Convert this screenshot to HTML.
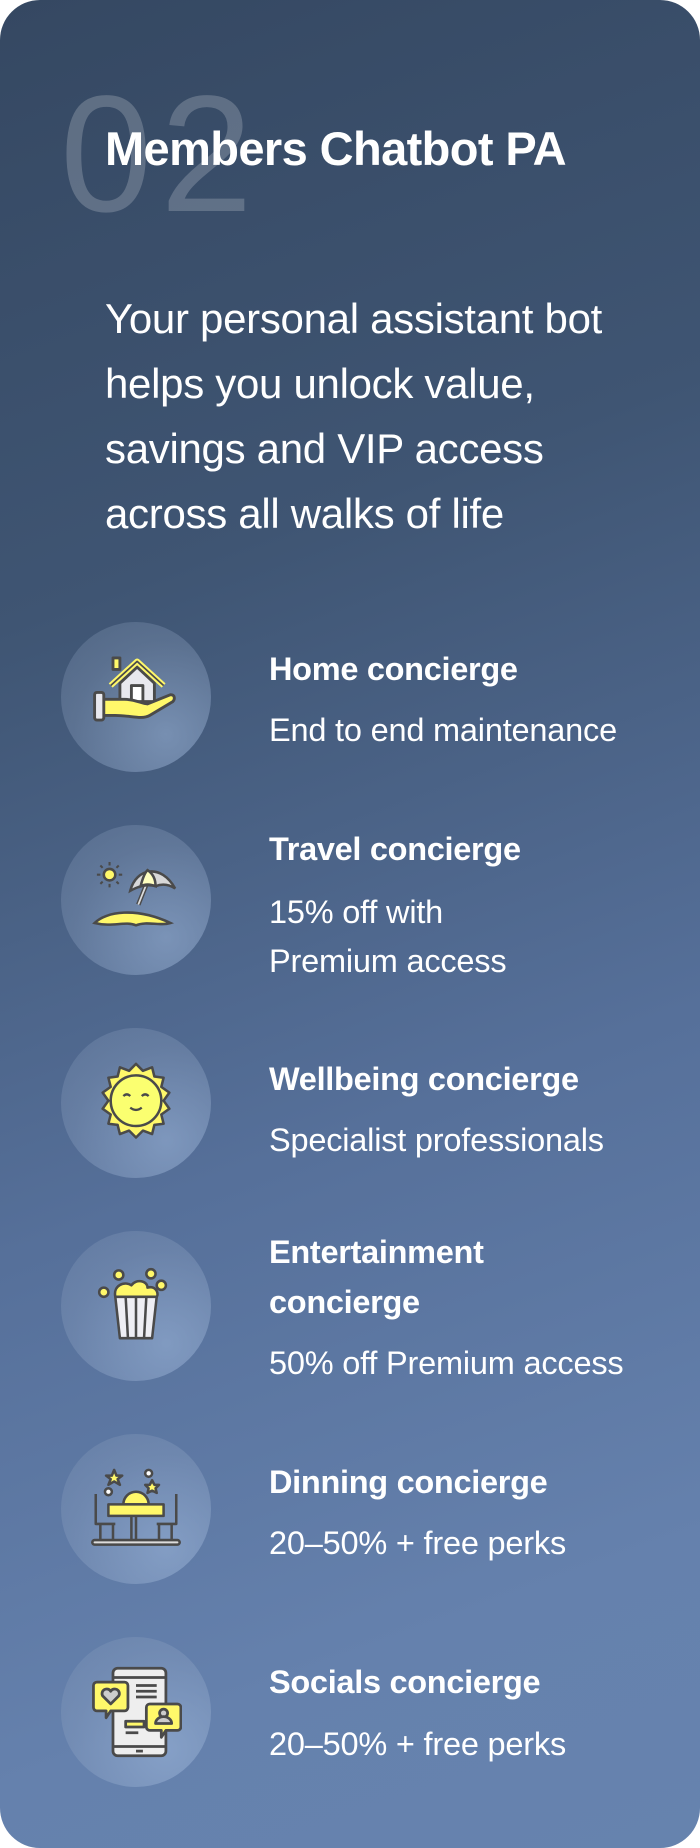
<!DOCTYPE html>
<html><head><meta charset="utf-8"><style>
html,body{margin:0;padding:0;background:#fff;}
body{width:700px;height:1848px;position:relative;overflow:hidden;font-family:"Liberation Sans",sans-serif;}
.card{position:absolute;left:0;top:0;width:700px;height:1848px;border-radius:40px;background:linear-gradient(160deg,#354862 0%,#3f5573 30%,#56709a 60%,#6581ad 85%,#6683ae 100%);overflow:hidden;}
.num{position:absolute;left:60px;top:72px;font-size:166px;font-weight:400;color:rgba(255,255,255,0.2);letter-spacing:8px;line-height:1;}
.title{position:absolute;left:105px;top:125px;font-size:47px;font-weight:700;color:#fff;letter-spacing:-0.6px;line-height:1;}
.para{position:absolute;left:105px;top:286px;font-size:42px;color:#fff;line-height:65px;letter-spacing:-0.3px;}
.circ{position:absolute;left:61px;width:150px;height:150px;border-radius:50%;background:radial-gradient(circle at 70% 75%,rgba(160,185,220,0.55),rgba(150,170,200,0.3) 60%,rgba(130,150,180,0.25));}
.circ svg{position:absolute;left:29px;top:29px;width:92px;height:92px;}
.h{position:absolute;left:269px;font-size:32.5px;font-weight:700;color:#fff;line-height:50px;letter-spacing:-0.3px;}
.s{position:absolute;left:269px;font-size:32.5px;color:#fff;line-height:49px;letter-spacing:-0.2px;}
</style></head><body>
<div class="card">
<div class="num">02</div>
<div class="title">Members Chatbot PA</div>
<div class="para">Your personal assistant bot<br>helps you unlock value,<br>savings and VIP access<br>across all walks of life</div>

<div class="circ" style="top:622px"><svg viewBox="0 0 80 80" fill="none" stroke="#4a4a4a" stroke-width="2.5" stroke-linejoin="round">
<rect x="20" y="6" width="6" height="10" fill="#fff86a"/>
<path d="M26 28 L41 14 L56 28 V44 H26Z" fill="#e8e8ee"/>
<rect x="36" y="30" width="10" height="14" fill="#fff"/>
<path d="M18 30 L41 9 L64 30" stroke="#fff86a" stroke-width="5"/>
<path d="M18 30 L41 9 L64 30" stroke="#4a4a4a" stroke-width="1.5"/>
<path d="M10 42 H30 C40 42 45 46 50 46 L70 38 C74 38 74 42 72 44 L52 56 C45 60 35 56 22 56 H10Z" fill="#fff86a"/>
<rect x="4" y="36" width="8" height="24" rx="2" fill="#e8e8ee"/>
</svg></div>
<div class="h" style="top:644px">Home concierge</div>
<div class="s" style="top:706px">End to end maintenance</div>

<div class="circ" style="top:825px"><svg viewBox="0 0 80 80" fill="none" stroke="#4a4a4a" stroke-width="2.2">
<circle cx="17" cy="18" r="5" fill="#fff86a"/>
<path d="M17 7v3M17 26v3M6 18h3M25 18h3M9 10l2 2M23 24l2 2M9 26l2-2M23 12l2-2" stroke-width="1.8"/>
<path d="M42 44 L50 24" stroke-width="4"/><path d="M42 44 L50 24" stroke="#ddd" stroke-width="1.5"/>
<path d="M35 32 C40 12 62 8 74 30 C68 26 62 26 57 28 C50 26 42 28 35 32Z" fill="#d8d8d8"/>
<path d="M50 14 C56 18 57 24 57 28 C52 26 48 26 44 28 C46 20 48 16 50 14Z" fill="#ffffc0"/>
<path d="M4 60 C14 50 40 46 70 60 C60 63 50 58 40 62 C30 58 20 64 4 60Z" fill="#fff86a"/>
</svg></div>
<div class="h" style="top:824px">Travel concierge</div>
<div class="s" style="top:888px">15% off with<br>Premium access</div>

<div class="circ" style="top:1028px"><svg viewBox="0 0 80 80" fill="none" stroke="#4a4a4a" stroke-width="2.2" stroke-linejoin="round">
<path d="M40 6 L46 12 L54 9 L56 17 L64 18 L62 26 L69 31 L64 38 L69 45 L62 50 L64 58 L56 59 L54 67 L46 64 L40 70 L34 64 L26 67 L24 59 L16 58 L18 50 L11 45 L16 38 L11 31 L18 26 L16 18 L24 17 L26 9 L34 12Z" fill="#fff86a"/>
<circle cx="40" cy="38" r="22" fill="#fbff70"/>
<path d="M29 34 q3-3 6 0M45 34 q3-3 6 0M35 44 q5 4 10 0" stroke-width="2"/>
</svg></div>
<div class="h" style="top:1054px">Wellbeing concierge</div>
<div class="s" style="top:1116px">Specialist professionals</div>

<div class="circ" style="top:1231px"><svg viewBox="0 0 80 80" fill="none" stroke="#4a4a4a" stroke-width="2.2" stroke-linejoin="round">
<path d="M22 32 C20 22 30 18 36 22 C40 16 50 18 50 24 C58 22 60 30 58 32Z" fill="#fff86a"/>
<circle cx="12" cy="28" r="4" fill="#fff86a"/><circle cx="25" cy="13" r="4" fill="#fff86a"/><circle cx="53" cy="12" r="4" fill="#fff86a"/><circle cx="62" cy="22" r="4" fill="#fff86a"/>
<path d="M22 32 H58 L54 68 H26Z" fill="#eeeef4"/>
<path d="M31 32 L33 68M40 32 V68M49 32 L47 68"/>
</svg></div>
<div class="h" style="top:1227px;line-height:50px">Entertainment<br>concierge</div>
<div class="s" style="top:1339px">50% off Premium access</div>

<div class="circ" style="top:1434px"><svg viewBox="0 0 80 80" fill="none" stroke="#4a4a4a" stroke-width="2.2" stroke-linejoin="round">
<path d="M21 6 l2 5 5 0 -4 3 2 5 -5-3 -5 3 2-5 -4-3 5 0Z" fill="#fff86a"/>
<path d="M54 15 l2 4 4 0 -3 3 1 4 -4-2 -4 2 1-4 -3-3 4 0Z" fill="#fff86a"/>
<circle cx="51" cy="9" r="3" fill="#fff"/><circle cx="16" cy="25" r="3" fill="#fff"/>
<path d="M29 36 a11 11 0 0 1 22 0Z" fill="#fff86a"/>
<rect x="16" y="36" width="48" height="10" fill="#fff86a"/>
<path d="M40 46 V68M36 46 V68"/>
<path d="M5 27 V53 H22 M75 27 V53 H58 M9 53 V68 M20 53 V68 M60 53 V68 M71 53 V68"/>
<rect x="2" y="67" width="76" height="4" rx="2" fill="#ddd"/>
</svg></div>
<div class="h" style="top:1457px">Dinning concierge</div>
<div class="s" style="top:1519px">20–50% + free perks</div>

<div class="circ" style="top:1637px"><svg viewBox="0 0 80 80" fill="none" stroke="#4a4a4a" stroke-width="2.4" stroke-linejoin="round">
<rect x="20" y="2" width="46" height="76" rx="4" fill="#eeeeee"/>
<path d="M20 10 H66 M20 70 H66" /><path d="M40 74 H46"/>
<path d="M40 17 H58 M40 22 H58 M40 27 H58 M31 52 H42 M31 58 H42"/>
<rect x="31" y="48" width="16" height="5" fill="#fff86a"/>
<path d="M6 14 H30 a3 3 0 0 1 3 3 V36 a3 3 0 0 1 -3 3 H18 L14 45 V39 H6 a3 3 0 0 1 -3 -3 V17 a3 3 0 0 1 3 -3Z" fill="#fff86a"/>
<path d="M18 33 L11 26 a3.5 3.5 0 0 1 7-4 a3.5 3.5 0 0 1 7 4Z" fill="#ccc"/>
<path d="M52 33 H76 a3 3 0 0 1 3 3 V53 a3 3 0 0 1 -3 3 H66 L62 62 V56 H52 a3 3 0 0 1 -3 -3 V36 a3 3 0 0 1 3 -3Z" fill="#fff86a"/>
<circle cx="64" cy="41" r="3.5" fill="#ccc"/><path d="M57 50 a7 6 0 0 1 14 0Z" fill="#ccc"/>
</svg></div>
<div class="h" style="top:1657px">Socials concierge</div>
<div class="s" style="top:1720px">20–50% + free perks</div>
</div>
</body></html>
